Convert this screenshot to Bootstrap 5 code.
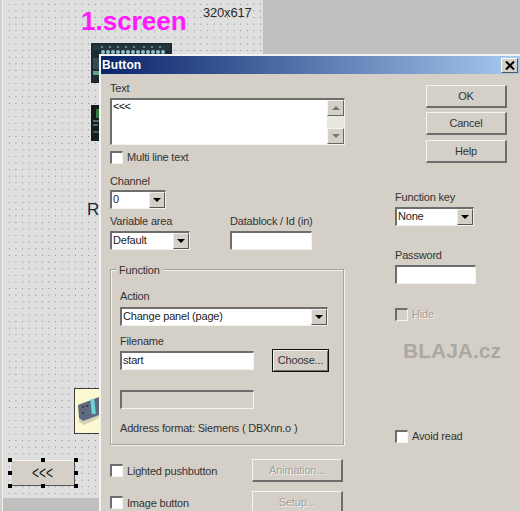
<!DOCTYPE html>
<html lang="en">
<head>
<meta charset="utf-8">
<title>Button</title>
<link href="https://cdn.jsdelivr.net/npm/bootstrap@5.3.0/dist/css/bootstrap.min.css" rel="stylesheet">
<style>
html,body{margin:0;height:511px;overflow:hidden;background:#c0c0c0}
.desk{position:relative;width:520px;height:511px;overflow:hidden;background:#c0c0c0;font-family:"Liberation Sans",Arial,sans-serif}
.stripe{position:absolute;left:0;top:0;width:3px;height:511px;background:#d4d0c8;border-right:1px solid #efeeea}
.sheet{position:absolute;left:3px;top:0;width:260px;height:498px;background-color:#dfdfdf;background-image:radial-gradient(circle at 50% 50%,#808080 0,#808080 .5px,rgba(0,0,0,0) .85px);background-size:6.62px 6.62px;background-position:3px 1px}
.sheet-title{position:absolute;left:81px;top:6px;font-size:26px;line-height:30px;font-weight:700;color:#ff19ff}
.sheet-size{position:absolute;left:203px;top:5px;font-size:13px;line-height:16px;letter-spacing:-.2px;color:#2b2b2b}
.sheet-r{position:absolute;left:87px;top:200px;font-size:17px;line-height:19px;color:#1a2a40}
.thumb{position:absolute;display:block}
.thumb-a{left:91px;top:43px}
.thumb-b{left:91px;top:105px}
.thumb-c{left:74px;top:388px}
.placed{position:absolute;left:10px;top:460px;width:65px;height:26px;background:#d4d0c8;border-top:1px solid #f5f5f2;border-left:1px solid #f5f5f2;border-right:1px solid #555;border-bottom:1px solid #555;display:flex;align-items:center;justify-content:center;font-size:12px;color:#111}
.placedtext{display:inline-block;transform:scaleY(1.6)}
.grip{position:absolute;width:4px;height:4px;background:#000}
.g1{left:8px;top:458px}.g2{left:41px;top:458px}.g3{left:74px;top:458px}
.g4{left:8px;top:471px}.g5{left:74px;top:471px}
.g6{left:8px;top:484px}.g7{left:41px;top:484px}.g8{left:74px;top:484px}

.dialog{position:absolute;left:99px;top:54px;width:421px;height:470px;background:#d4d0c8;border-top:2px solid #f4f3f0;border-left:2px solid #f4f3f0;font-size:11px;letter-spacing:-.19px;color:#333;line-height:14px}
.titlebar{height:18px;background:linear-gradient(90deg,#0a246a,#a6caf0);display:flex;align-items:center;justify-content:space-between;padding:0 2px 0 1px}
.titletext{font-size:12px;font-weight:700;color:#fff;letter-spacing:.1px}
.xbtn{width:17px;height:15px;background:#d4d0c8;border-top:1px solid #fff;border-left:1px solid #fff;border-right:1px solid #555;border-bottom:1px solid #555;display:flex;align-items:center;justify-content:center;padding:0}
.dbody{display:flex;align-items:flex-start}
.cleft{width:235px;margin-left:9px;padding-top:7px}
.cright{width:115px;margin-left:50px;padding-top:11px}

.lbl{display:block;height:14px;line-height:14px;margin:0;white-space:nowrap}
.sunk{display:block;height:19px;background:#fff;border-style:solid;border-width:2px 1px 1px 2px;border-color:#6d6d6d #f4f3f0 #f4f3f0 #6d6d6d;border-radius:0;padding:0 1px 2px;font-size:11px;letter-spacing:-.19px;line-height:13px;color:#222;box-shadow:none;min-height:0;font-family:inherit}
.sunk:focus{box-shadow:none;border-color:#6d6d6d #f4f3f0 #f4f3f0 #6d6d6d}
.sunk:disabled{background:#d4d0c8}
.combo{display:flex;align-items:stretch;justify-content:space-between;height:19px;background:#fff;border-style:solid;border-width:2px 1px 1px 2px;border-color:#6d6d6d #f4f3f0 #f4f3f0 #6d6d6d;line-height:15px;color:#222;padding-left:1px}
.arrow{width:16px;background:#d4d0c8;border-top:1px solid #eee;border-left:1px solid #eee;border-right:1px solid #555;border-bottom:1px solid #555;display:flex;align-items:center;justify-content:center}
.arrow::after{content:"";border-left:4px solid transparent;border-right:4px solid transparent;border-top:4px solid #000}
.w-channel{width:56px}.w-var{width:80px}.w-db{width:82px}.w-action{width:208px}.w-file{width:134px}.w-key{width:79px}.w-pass{width:81px}

.memo{position:relative;height:47px;margin-top:3px;background:#fff;border-style:solid;border-width:2px 1px 1px 2px;border-color:#6d6d6d #f4f3f0 #f4f3f0 #6d6d6d;display:flex;justify-content:space-between;padding-left:1px;color:#000;line-height:13px}
.memotext{letter-spacing:-.7px}
.sbar{width:17px;display:flex;flex-direction:column;background-color:#e9e7e2;background-image:radial-gradient(circle,#cfcbc3 .5px,rgba(0,0,0,0) .7px);background-size:2px 2px;justify-content:space-between}
.sbtn{height:16px;background:#d4d0c8;border-top:1px solid #f4f3f0;border-left:1px solid #f4f3f0;border-right:1px solid #666;border-bottom:1px solid #666;display:flex;align-items:center;justify-content:center}
.sbtn::after{content:"";border-left:4px solid transparent;border-right:4px solid transparent}
.s-up::after{border-bottom:4px solid #777}
.s-dn::after{border-top:4px solid #777}

.chkrow{display:flex;align-items:center;height:14px;white-space:nowrap}
.tick{flex:none;appearance:none;-webkit-appearance:none;width:13px;height:13px;margin:0 4px 0 0;background:#fff;border-style:solid;border-width:2px 1px 1px 2px;border-color:#6d6d6d #f4f3f0 #f4f3f0 #6d6d6d;border-radius:0}
.tick:disabled{background:#d4d0c8;opacity:1}
.off{color:#a3a09a;text-shadow:1px 1px 0 #f4f3f0}
.pair{display:flex;gap:40px}

.mt-multi{margin-top:5px}
.mt-channel{margin-top:10px}
.mt-field2{margin-top:2px}
.mt-var{margin-top:5px}
.mt-field3{margin-top:3px}
.mt-action{margin-top:4px}
.group{position:relative;height:176px;margin-top:19px;width:234px;border:1px solid #a5a29b;box-shadow:inset 1px 1px 0 #f4f3f0,1px 1px 0 #f4f3f0;padding:19px 9px 0 9px}
.grouptitle{position:absolute;left:5px;top:-7px;background:#d4d0c8;padding:0 3px;line-height:14px}
.mt-file{margin-top:8px}
.filerow{display:flex;align-items:center;margin-top:1px;gap:18px}
.mt-dis{margin-top:18px}
.mt-addr{margin-top:12px}

.wbtn{display:block;background:#d4d0c8;border-style:solid;border-width:1px 2px 2px 1px;border-color:#f4f3f0 #6d6d6d #6d6d6d #f4f3f0;border-radius:0;padding:0;height:23px;font-size:11px;letter-spacing:-.19px;line-height:18px;color:#333;text-align:center;font-family:inherit}
.wbtn:disabled{background:#d4d0c8;opacity:1;border-color:#f4f3f0 #6d6d6d #6d6d6d #f4f3f0;color:#a3a09a;text-shadow:1px 1px 0 #f4f3f0}
.wbtn-main{width:81px;margin-left:31px}
.wbtn-side{width:91px}
.wbtn-focus{width:57px;flex:none;border:1px solid #111;padding-bottom:2px;box-shadow:inset 1px 1px 0 #f4f3f0,inset -1px -1px 0 #6d6d6d}
.gap-ok{margin-top:4px}
.gap-help{margin-top:5px}
.btnrow{display:flex;align-items:center;justify-content:space-between;width:233px;height:23px}
.mt-light{margin-top:14px}
.mt-image{margin-top:9px}
.mt-fkey{margin-top:27px}
.mt-pass{margin-top:22px}
.mt-hide{margin-top:23px}
.brand{margin:18px 0 0 8px;font-size:21px;line-height:24px;font-weight:700;letter-spacing:0;color:#aba8a2}
.mt-avoid{margin-top:66px}
</style>
</head>
<body>
<div class="desk">
  <div class="stripe"></div>
  <div class="sheet"></div>
  <div class="sheet-title">1.screen</div>
  <div class="sheet-size">320x617</div>
  <div class="sheet-r">R</div>

  <svg class="thumb thumb-a" width="81" height="40" viewBox="0 0 81 40">
    <rect width="81" height="40" fill="#1d2b32"/>
    <rect x="2" y="2" width="77" height="5" fill="#26363f"/>
    <g fill="#7fa8b5" opacity=".7">
      <rect x="10" y="3" width="2" height="2"/><rect x="18" y="3" width="2" height="2"/><rect x="26" y="3" width="2" height="2"/><rect x="34" y="3" width="2" height="2"/><rect x="42" y="3" width="2" height="2"/><rect x="52" y="3" width="2" height="2"/><rect x="60" y="3" width="2" height="2"/><rect x="68" y="3" width="2" height="2"/>
    </g>
    <g fill="#8fc4cf">
      <circle cx="12" cy="9" r="2"/><circle cx="17" cy="9" r="2"/><circle cx="22" cy="9" r="2"/><circle cx="27" cy="9" r="2"/><circle cx="32" cy="9" r="2"/><circle cx="37" cy="9" r="2"/><circle cx="42" cy="9" r="2"/><circle cx="47" cy="9" r="2"/><circle cx="52" cy="9" r="2"/><circle cx="57" cy="9" r="2"/><circle cx="62" cy="9" r="2"/><circle cx="67" cy="9" r="2"/><circle cx="72" cy="9" r="2"/>
    </g>
    <rect x="2" y="15" width="7" height="11" fill="#3a4a52"/>
    <rect x="2" y="28" width="6" height="4" fill="#5fa690"/>
  </svg>
  <svg class="thumb thumb-b" width="30" height="36" viewBox="0 0 30 36">
    <rect width="30" height="36" fill="#141c20"/>
    <rect x="5" y="4" width="3" height="9" fill="#2f7a3c"/>
    <rect x="2" y="15" width="7" height="2" fill="#59666d"/>
    <rect x="2" y="19" width="5" height="2" fill="#59666d"/>
    <rect x="2" y="26" width="7" height="2" fill="#4a565c"/>
  </svg>
  <svg class="thumb thumb-c" width="25" height="46" viewBox="0 0 25 46">
    <rect x=".5" y=".5" width="26" height="45" fill="#fbf8d2" stroke="#3f3f3f"/>
    <polygon points="5,20 25,11 25,30 10,37 5,34" fill="#b9b7a4" opacity=".6"/>
    <polygon points="4,17 25,9 25,27 9,33 5,30" fill="#5f6a80"/>
    <rect x="17" y="11" width="4" height="15" fill="#6fd4d8" transform="rotate(-6 19 18)"/>
    <circle cx="9" cy="19" r="1" fill="#333"/><circle cx="13" cy="18" r="1" fill="#333"/><circle cx="9" cy="25" r="1" fill="#2c3340"/>
  </svg>

  <div class="placed"><span class="placedtext">&lt;&lt;&lt;</span></div>
  <span class="grip g1"></span><span class="grip g2"></span><span class="grip g3"></span><span class="grip g4"></span><span class="grip g5"></span><span class="grip g6"></span><span class="grip g7"></span><span class="grip g8"></span>

  <div class="dialog">
    <div class="titlebar">
      <span class="titletext">Button</span>
      <button type="button" class="xbtn" aria-label="Close">
        <svg width="10" height="9" viewBox="0 0 10 9"><path d="M1 0.5 L9 8.5 M9 0.5 L1 8.5" stroke="#000" stroke-width="2" fill="none"/></svg>
      </button>
    </div>
    <div class="dbody">
      <div class="cleft">
        <label class="lbl">Text</label>
        <div class="memo">
          <span class="memotext">&lt;&lt;&lt;</span>
          <div class="sbar"><span class="sbtn s-up"></span><span class="sbtn s-dn"></span></div>
        </div>
        <div class="chkrow mt-multi"><input type="checkbox" class="tick"><span>Multi line text</span></div>

        <label class="lbl mt-channel">Channel</label>
        <div class="combo w-channel mt-field2"><span>0</span><span class="arrow"></span></div>

        <div class="pair">
          <div>
            <label class="lbl mt-var">Variable area</label>
            <div class="combo w-var mt-field3"><span>Default</span><span class="arrow"></span></div>
          </div>
          <div>
            <label class="lbl mt-var">Datablock / Id (in)</label>
            <input class="sunk w-db mt-field3" type="text">
          </div>
        </div>

        <div class="group">
          <span class="grouptitle">Function</span>
          <label class="lbl">Action</label>
          <div class="combo w-action mt-action"><span>Change panel (page)</span><span class="arrow"></span></div>
          <label class="lbl mt-file">Filename</label>
          <div class="filerow">
            <input class="sunk w-file" type="text" value="start">
            <button type="button" class="wbtn wbtn-focus">Choose...</button>
          </div>
          <input class="sunk w-file mt-dis" type="text" disabled>
          <div class="lbl mt-addr">Address format: Siemens ( DBXnn.o )</div>
        </div>

        <div class="btnrow mt-light">
          <div class="chkrow"><input type="checkbox" class="tick"><span>Lighted pushbutton</span></div>
          <button type="button" class="wbtn wbtn-side" disabled>Animation...</button>
        </div>
        <div class="btnrow mt-image">
          <div class="chkrow"><input type="checkbox" class="tick"><span>Image button</span></div>
          <button type="button" class="wbtn wbtn-side" disabled>Setup...</button>
        </div>
      </div>

      <div class="cright">
        <button type="button" class="wbtn wbtn-main">OK</button>
        <button type="button" class="wbtn wbtn-main gap-ok">Cancel</button>
        <button type="button" class="wbtn wbtn-main gap-help">Help</button>
        <label class="lbl mt-fkey">Function key</label>
        <div class="combo w-key mt-field3"><span>None</span><span class="arrow"></span></div>
        <label class="lbl mt-pass">Password</label>
        <input class="sunk w-pass mt-field3" type="password">
        <div class="chkrow mt-hide off"><input type="checkbox" class="tick" disabled><span>Hide</span></div>
        <div class="brand">BLAJA.cz</div>
        <div class="chkrow mt-avoid"><input type="checkbox" class="tick"><span>Avoid read</span></div>
      </div>
    </div>
  </div>
</div>
<script src="https://cdn.jsdelivr.net/npm/bootstrap@5.3.0/dist/js/bootstrap.bundle.min.js"></script>
</body>
</html>
